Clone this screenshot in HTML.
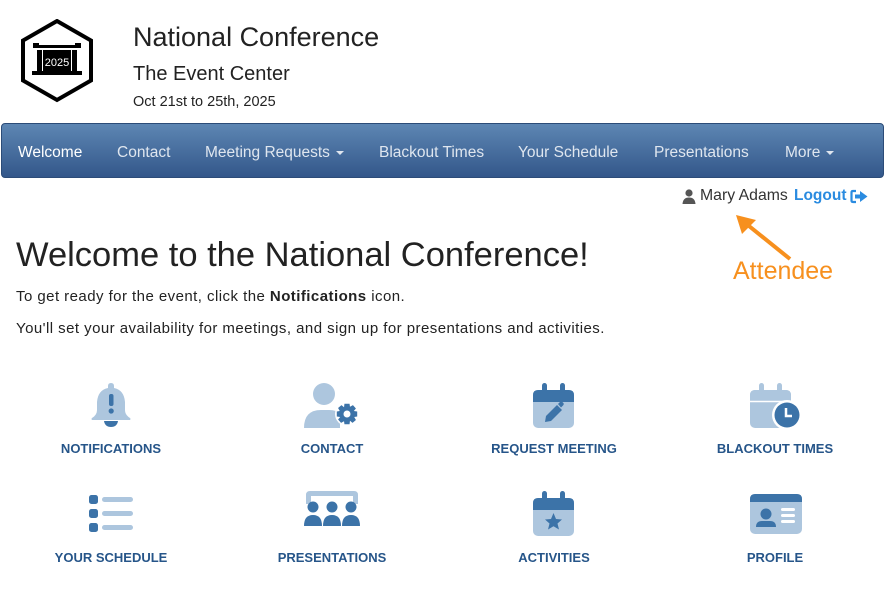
<!DOCTYPE html>
<html><head><meta charset="utf-8"><style>
*{margin:0;padding:0;box-sizing:border-box}
body{width:885px;height:604px;background:#fff;font-family:"Liberation Sans",sans-serif;color:#222;position:relative;overflow:hidden}
.abs{position:absolute;white-space:nowrap}
.nav{position:absolute;left:1px;top:123px;width:883px;height:55px;border-radius:4px;background:linear-gradient(#5d86b3,#33578a);border:1px solid #2c4c78}
.nav span{position:absolute;top:20px;font-size:15.5px;color:#dfe6ef}
.car{display:inline-block;border-left:4px solid transparent;border-right:4px solid transparent;border-top:4px solid #dfe6ef;vertical-align:middle;margin-left:6px}
.lbl{position:absolute;font-weight:bold;font-size:13px;color:#265589;transform:translateX(-50%);white-space:nowrap}
svg.ic{position:absolute}
</style></head><body>
<svg class="ic" style="left:20px;top:19px" width="74" height="84" viewBox="0 0 74 84">
<polygon points="37,2 71,21.5 71,61.5 37,81 3,61.5 3,21.5" fill="none" stroke="#000" stroke-width="4"/>
<rect x="13" y="24" width="6" height="5"/><rect x="55" y="24" width="6" height="5"/>
<rect x="16" y="26" width="42" height="3"/>
<rect x="17" y="31" width="5" height="21"/><rect x="52" y="31" width="5" height="21"/>
<rect x="23" y="31" width="28" height="21"/>
<rect x="12" y="52" width="50" height="4"/>
<text x="37" y="47" font-size="11" fill="#fff" text-anchor="middle" font-family="Liberation Sans">2025</text>
</svg>
<div class="abs" style="left:133px;top:22px;font-size:27px;color:#222">National Conference</div>
<div class="abs" style="left:133px;top:63px;font-size:20px;color:#222">The Event Center</div>
<div class="abs" style="left:133px;top:94px;font-size:14.5px;color:#222">Oct 21st to 25th, 2025</div>
<div class="nav">
<span style="left:16px;color:#fff">Welcome</span>
<span style="left:115px">Contact</span>
<span style="left:203px">Meeting Requests<i class="car"></i></span>
<span style="left:377px">Blackout Times</span>
<span style="left:516px">Your Schedule</span>
<span style="left:652px">Presentations</span>
<span style="left:783px">More<i class="car"></i></span>
</div>
<svg class="ic" style="left:682px;top:189px" width="14" height="15" viewBox="0 0 14 15"><circle cx="7" cy="4" r="3.6" fill="#555"/><path d="M0.5 15 Q1 8.5 7 8.5 Q13 8.5 13.5 15Z" fill="#555"/></svg>
<div class="abs" style="left:700px;top:187px;font-size:15.8px;color:#333">Mary Adams</div>
<div class="abs" style="left:794px;top:187px;font-size:15.5px;color:#2a8be0;font-weight:bold">Logout</div>
<svg class="ic" style="left:850px;top:189px" width="19" height="15" viewBox="0 0 19 15"><path d="M6 2H3Q1.5 2 1.5 3.5V11.5Q1.5 13 3 13H6" fill="none" stroke="#2a8be0" stroke-width="2.2"/><path d="M5 5.5H10V2L17.5 7.5L10 13V9.5H5Z" fill="#2a8be0"/></svg>
<svg class="ic" style="left:730px;top:212px" width="64" height="50" viewBox="0 0 64 50"><line x1="60" y1="47" x2="14" y2="10" stroke="#f7901e" stroke-width="4"/><polygon points="6,3 26,8 12,22" fill="#f7901e"/></svg>
<div class="abs" style="left:733px;top:257px;font-size:25px;color:#f7901e">Attendee</div>
<div class="abs" style="left:16px;top:236px;font-size:34.5px;color:#222">Welcome to the National Conference!</div>
<div class="abs" style="left:16px;top:288px;font-size:15px;letter-spacing:.45px;color:#222">To get ready for the event, click the <b>Notifications</b> icon.</div>
<div class="abs" style="left:16px;top:320px;font-size:15px;letter-spacing:.45px;color:#222">You'll set your availability for meetings, and sign up for presentations and activities.</div>

<svg class="ic" style="left:88px;top:382px" width="46" height="48" viewBox="0 0 46 48"><path d="M20 4Q20 1 23 1Q26 1 26 4V6Q36 8 37 20V28Q37 33 42 36Q43 37 42 38H4Q3 37 4 36Q9 33 9 28V20Q10 8 20 6Z" fill="#adc6de"/><rect x="21" y="12" width="4.5" height="12" rx="2" fill="#3c73a8"/><circle cx="23.2" cy="29" r="2.6" fill="#3c73a8"/><path d="M16 39H30Q29 45 23 45Q17 45 16 39Z" fill="#3c73a8"/></svg>
<div class="lbl" style="left:111px;top:441px">NOTIFICATIONS</div>
<svg class="ic" style="left:303px;top:382px" width="58" height="48" viewBox="0 0 58 48"><circle cx="21" cy="12" r="11" fill="#adc6de"/><path d="M1 46Q1 28 18 28H26Q34 28 37 32V46Z" fill="#adc6de"/><g transform="translate(44,32)"><circle r="12" fill="#fff"/><path d="M-3-12H3L3.5-8.5L7-10.5L10.5-6.5L8-3.5L12-3V3L8.5 3.5L10.5 7L6.5 10.5L3.5 8L3 12H-3L-3.5 8.5L-7 10.5L-10.5 6.5L-8 3.5L-12 3V-3L-8.5-3.5L-10.5-7L-6.5-10.5L-3.5-8Z" fill="#3c73a8" transform="scale(.85)"/><circle r="3.5" fill="#fff"/></g></svg>
<div class="lbl" style="left:332px;top:441px">CONTACT</div>
<svg class="ic" style="left:532px;top:382px" width="44" height="48" viewBox="0 0 44 48"><rect x="1" y="8" width="41" height="38" rx="5" fill="#adc6de"/><path d="M1 20V13Q1 8 6 8H37Q42 8 42 13V20Z" fill="#3c73a8"/><rect x="10" y="1" width="5" height="11" rx="2.5" fill="#3c73a8"/><rect x="28" y="1" width="5" height="11" rx="2.5" fill="#3c73a8"/><path d="M13 40L14 34L25 23L30 28L19 39Z" fill="#3c73a8"/><path d="M26 22L28 20Q29.5 19 31 20.5Q32.5 22 31 23.5L29 25.5Z" fill="#3c73a8"/></svg>
<div class="lbl" style="left:554px;top:441px">REQUEST MEETING</div>
<svg class="ic" style="left:749px;top:382px" width="54" height="48" viewBox="0 0 54 48"><rect x="1" y="8" width="41" height="38" rx="5" fill="#adc6de"/><path d="M1 19V13Q1 8 6 8H37Q42 8 42 13V19Z" fill="#adc6de"/><line x1="1" y1="19.5" x2="42" y2="19.5" stroke="#fff" stroke-width="1.5"/><rect x="10" y="1" width="5" height="11" rx="2.5" fill="#adc6de"/><rect x="28" y="1" width="5" height="11" rx="2.5" fill="#adc6de"/><circle cx="38" cy="33" r="15" fill="#fff"/><circle cx="38" cy="33" r="12.5" fill="#3c73a8"/><path d="M37 26V34H43" fill="none" stroke="#fff" stroke-width="2.5"/></svg>
<div class="lbl" style="left:775px;top:441px">BLACKOUT TIMES</div>
<svg class="ic" style="left:88px;top:492px" width="46" height="42" viewBox="0 0 46 42"><rect x="1" y="3" width="9" height="9" rx="2.5" fill="#3c73a8"/><rect x="1" y="17" width="9" height="9" rx="2.5" fill="#3c73a8"/><rect x="1" y="31" width="9" height="9" rx="2.5" fill="#3c73a8"/><rect x="14" y="5" width="31" height="5" rx="2.5" fill="#adc6de"/><rect x="14" y="19" width="31" height="5" rx="2.5" fill="#adc6de"/><rect x="14" y="33" width="31" height="5" rx="2.5" fill="#adc6de"/></svg>
<div class="lbl" style="left:111px;top:550px">YOUR SCHEDULE</div>
<svg class="ic" style="left:303px;top:490px" width="58" height="48" viewBox="0 0 58 48"><path d="M3 14V5Q3 1 7 1H51Q55 1 55 5V14H50V6H8V14Z" fill="#adc6de"/><g fill="#3c73a8"><circle cx="10" cy="17" r="5.5"/><circle cx="29" cy="17" r="5.5"/><circle cx="48" cy="17" r="5.5"/><path d="M1 36Q1 25 10 25Q19 25 19 36Z"/><path d="M20 36Q20 25 29 25Q38 25 38 36Z"/><path d="M39 36Q39 25 48 25Q57 25 57 36Z"/></g></svg>
<div class="lbl" style="left:332px;top:550px">PRESENTATIONS</div>
<svg class="ic" style="left:532px;top:490px" width="44" height="48" viewBox="0 0 44 48"><rect x="1" y="8" width="41" height="38" rx="5" fill="#adc6de"/><path d="M1 20V13Q1 8 6 8H37Q42 8 42 13V20Z" fill="#3c73a8"/><rect x="10" y="1" width="5" height="11" rx="2.5" fill="#3c73a8"/><rect x="28" y="1" width="5" height="11" rx="2.5" fill="#3c73a8"/><polygon points="21.5,23 24,29 30,29.5 25.5,33.5 27,39.5 21.5,36.3 16,39.5 17.5,33.5 13,29.5 19,29" fill="#3c73a8"/></svg>
<div class="lbl" style="left:554px;top:550px">ACTIVITIES</div>
<svg class="ic" style="left:749px;top:493px" width="54" height="42" viewBox="0 0 54 42"><rect x="1" y="1" width="52" height="40" rx="5" fill="#adc6de"/><path d="M1 9V6Q1 1 6 1H48Q53 1 53 6V9Z" fill="#3c73a8"/><circle cx="17" cy="21" r="5.5" fill="#3c73a8"/><path d="M7 34Q7 28 13 28H21Q27 28 27 34Z" fill="#3c73a8"/><g fill="#fff"><rect x="32" y="15" width="14" height="3" rx="1.5"/><rect x="32" y="21" width="14" height="3" rx="1.5"/><rect x="32" y="27" width="14" height="3" rx="1.5"/></g></svg>
<div class="lbl" style="left:775px;top:550px">PROFILE</div>
</body></html>
